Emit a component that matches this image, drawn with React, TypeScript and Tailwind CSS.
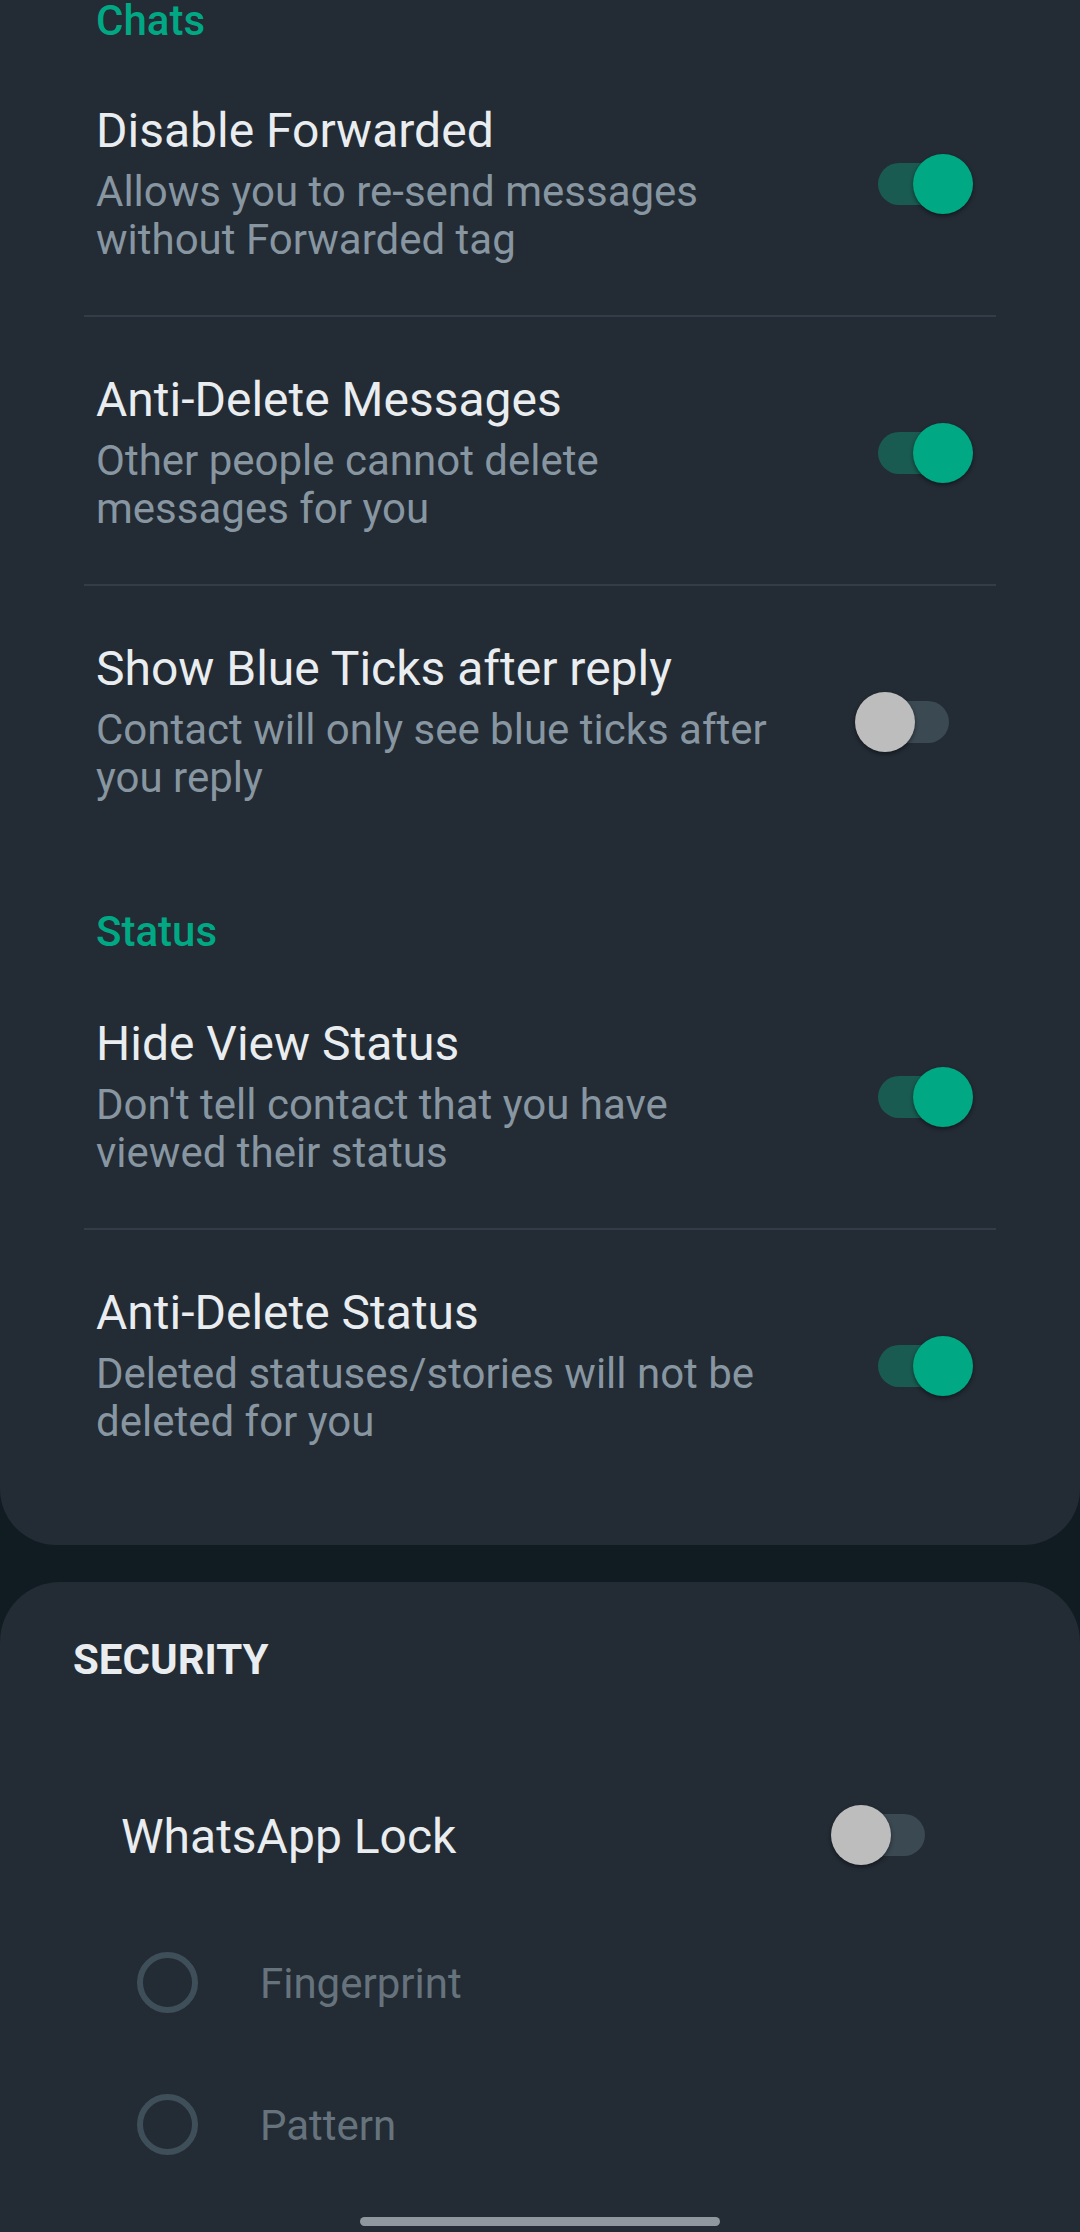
import type { ReactNode } from 'react';

interface ToggleProps {
  on: boolean;
}

function Toggle({ on }: ToggleProps) {
  return (
    <div
      className={`relative h-[42px] w-[71px] shrink-0 rounded-full ${
        on ? 'bg-[#1a5b51]' : 'bg-[#3b4952]'
      }`}
    >
      <div
        className={`absolute top-[-9px] h-[60px] w-[60px] rounded-full shadow-[0_2px_4px_rgba(0,0,0,0.45)] ${
          on ? 'left-[35px] bg-[#00a884]' : 'left-[-23px] bg-[#bdbdbd]'
        }`}
      />
    </div>
  );
}

interface PrefProps {
  title: string;
  summary: string;
  on: boolean;
}

function SwitchPref({ title, summary, on }: PrefProps) {
  return (
    <div className="flex items-center pl-[96px] pr-[131px] pt-[55px] pb-[51px]">
      <div className="w-[680px]">
        <div className="text-[48px] leading-[56px] text-[#e9edef]">{title}</div>
        <div className="mt-[9px] text-[42px] leading-[48px] text-[#8796a0]">{summary}</div>
      </div>
      <div className="ml-auto">
        <Toggle on={on} />
      </div>
    </div>
  );
}

function Divider() {
  return <div className="mx-[84px] h-[2px] bg-[#333c47]" />;
}

function Category({ children, className }: { children: ReactNode; className?: string }) {
  return (
    <div className={`pl-[96px] text-[42px] font-medium leading-[42px] text-[#00a884] ${className ?? ''}`}>
      {children}
    </div>
  );
}

function RadioRow({ label }: { label: string }) {
  return (
    <div className="flex h-[142px] items-center pl-[137px]">
      <div className="h-[61px] w-[61px] shrink-0 rounded-full border-[6px] border-[#3f4f5a]" />
      <span className="ml-[62px] pt-[4px] text-[42px] leading-[48px] text-[#66737c]">{label}</span>
    </div>
  );
}

export default function App() {
  return (
    <div
      className="relative h-[2232px] overflow-hidden bg-[#111b22]"
      style={{ fontFamily: 'Roboto, "Noto Sans", sans-serif' }}
    >
      {/* main settings card */}
      <div className="h-[1545px] overflow-hidden rounded-b-[56px] bg-[#232b35]">
        <Category className="pb-[6px]">Chats</Category>
        <SwitchPref
          title="Disable Forwarded"
          summary="Allows you to re-send messages without Forwarded tag"
          on
        />
        <Divider />
        <SwitchPref
          title="Anti-Delete Messages"
          summary="Other people cannot delete messages for you"
          on
        />
        <Divider />
        <SwitchPref
          title="Show Blue Ticks after reply"
          summary="Contact will only see blue ticks after you reply"
          on={false}
        />
        <Category className="pt-[58px] pb-[8px]">Status</Category>
        <SwitchPref
          title="Hide View Status"
          summary="Don't tell contact that you have viewed their status"
          on
        />
        <Divider />
        <SwitchPref
          title="Anti-Delete Status"
          summary="Deleted statuses/stories will not be deleted for you"
          on
        />
      </div>

      {/* security card */}
      <div className="mt-[37px] h-[650px] rounded-t-[60px] bg-[#232b35] pt-[57px]">
        <div className="pl-[73px] text-[42px] font-bold leading-[42px] text-[#e9edef]">SECURITY</div>
        <div className="mt-[128px] flex h-[56px] items-center pl-[121px] pr-[155px]">
          <span className="text-[48px] leading-[56px] text-[#e9edef]">WhatsApp Lock</span>
          <div className="ml-auto mt-[-4px]">
            <Toggle on={false} />
          </div>
        </div>
        <div className="mt-[46px]">
          <RadioRow label="Fingerprint" />
          <RadioRow label="Pattern" />
        </div>
      </div>

      {/* gesture handle */}
      <div className="absolute bottom-[6px] left-[360px] h-[9px] w-[360px] rounded-full bg-[#8f989e]" />
    </div>
  );
}
